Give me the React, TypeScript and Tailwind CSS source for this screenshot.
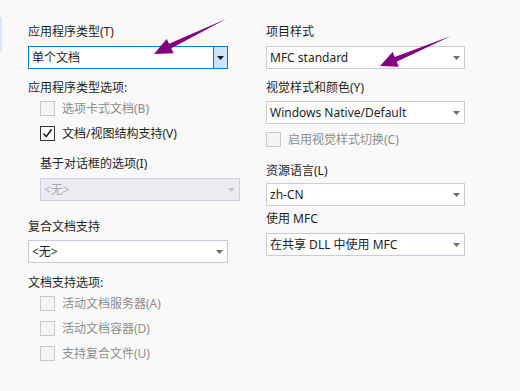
import React from "react"

const font = { fontFamily: '"Noto Sans", "Noto Sans CJK SC", sans-serif' }

type ComboProps = { value: string; width: string; focused?: boolean; disabled?: boolean }

const Combo = ({ value, width, focused, disabled }: ComboProps) => {
  if (focused) {
    return (
      <div className={`${width} h-[23px] flex border border-[#0078d7] bg-white`}>
        <div className="flex-1 flex items-center pl-[3px] text-[12px] text-[#1e1e1e]">{value}</div>
        <div className="w-[14px] flex items-center justify-center border-l border-[#0078d7] bg-[#cce4f7]">
          <Caret color="#1e1e1e" />
        </div>
      </div>
    )
  }
  return (
    <div
      className={`${width} h-[23px] flex items-center justify-between border pl-[3px] pr-[4px] text-[12px] ${
        disabled ? "border-[#d0cde0] bg-[#ecebf2] text-[#a9a9b0]" : "border-[#ccc9dc] bg-white text-[#1e1e1e]"
      }`}
    >
      <span>{value}</span>
      <Caret color={disabled ? "#c4c3cc" : "#6b6b6b"} />
    </div>
  )
}

const Caret = ({ color }: { color: string }) => (
  <svg width="7" height="4" viewBox="0 0 7 4">
    <path d="M0 0 H7 L3.5 4 Z" fill={color} />
  </svg>
)

const Check = ({ label, checked, disabled }: { label: string; checked?: boolean; disabled?: boolean }) => (
  <div className="flex items-center h-[15px] gap-[7px]">
    <div
      className={`w-[15px] h-[15px] flex items-center justify-center border ${
        disabled ? "border-[#c8c8c8] bg-[#f4f4f4]" : "border-[#333333] bg-white"
      }`}
    >
      {checked && (
        <svg width="11" height="11" viewBox="0 0 11 11">
          <path d="M1.5 5.5 L4.3 8.6 L9.6 1.2" fill="none" stroke="#1e1e1e" strokeWidth="1.6" />
        </svg>
      )}
    </div>
    <span className={`text-[12px] leading-[16px] ${disabled ? "text-[#8c8c8c]" : "text-[#1e1e1e]"}`}>{label}</span>
  </div>
)

const Label = ({ text, className = "" }: { text: string; className?: string }) => (
  <div className={`text-[12px] leading-[16px] text-[#1e1e1e] ${className}`}>{text}</div>
)

export default function App() {
  return (
    <div className="relative w-[520px] h-[391px] bg-[#f9f9f9] flex overflow-hidden" style={font}>
      <div className="w-[2px] h-[35px] mt-[17px] bg-[#dde6f5]" />

      {/* left column */}
      <div className="ml-[26px] flex flex-col w-[200px]">
        <Label text="应用程序类型(T)" className="mt-[24px]" />
        <div className="mt-[6px]">
          <Combo value="单个文档" width="w-[200px]" focused />
        </div>
        <Label text="应用程序类型选项:" className="mt-[11px]" />
        <div className="ml-[12px] mt-[5px] flex flex-col gap-[10px]">
          <Check label="选项卡式文档(B)" disabled />
          <Check label="文档/视图结构支持(V)" checked />
        </div>
        <div className="ml-[12px]">
          <Label text="基于对话框的选项(I)" className="mt-[15px]" />
          <div className="mt-[6px]">
            <Combo value="<无>" width="w-[200px]" disabled />
          </div>
        </div>
        <Label text="复合文档支持" className="mt-[18px]" />
        <div className="mt-[5px]">
          <Combo value="<无>" width="w-[200px]" />
        </div>
        <Label text="文档支持选项:" className="mt-[12px]" />
        <div className="ml-[12px] mt-[5px] flex flex-col gap-[10px]">
          <Check label="活动文档服务器(A)" disabled />
          <Check label="活动文档容器(D)" disabled />
          <Check label="支持复合文件(U)" disabled />
        </div>
      </div>

      {/* right column */}
      <div className="ml-[38px] flex flex-col w-[199px]">
        <Label text="项目样式" className="mt-[24px]" />
        <div className="mt-[6px]">
          <Combo value="MFC standard" width="w-[199px]" />
        </div>
        <Label text="视觉样式和颜色(Y)" className="mt-[11px]" />
        <div className="mt-[5px]">
          <Combo value="Windows Native/Default" width="w-[199px]" />
        </div>
        <div className="mt-[8px]">
          <Check label="启用视觉样式切换(C)" disabled />
        </div>
        <Label text="资源语言(L)" className="mt-[16px]" />
        <div className="mt-[4px]">
          <Combo value="zh-CN" width="w-[199px]" />
        </div>
        <Label text="使用 MFC" className="mt-[5px]" />
        <div className="mt-[6px]">
          <Combo value="在共享 DLL 中使用 MFC" width="w-[199px]" />
        </div>
      </div>

      {/* annotation arrows */}
      <svg className="absolute left-0 top-0 pointer-events-none" width="520" height="391">
        <polygon points="154,54 166.7,38.9 169.1,43.8 226,19 171.3,48.3 173.7,53.3" fill="#800080" />
        <polygon points="380,66 392.6,52 394.7,57.1 451,36 396.7,61.7 398.8,66.8" fill="#800080" />
      </svg>
    </div>
  )
}
